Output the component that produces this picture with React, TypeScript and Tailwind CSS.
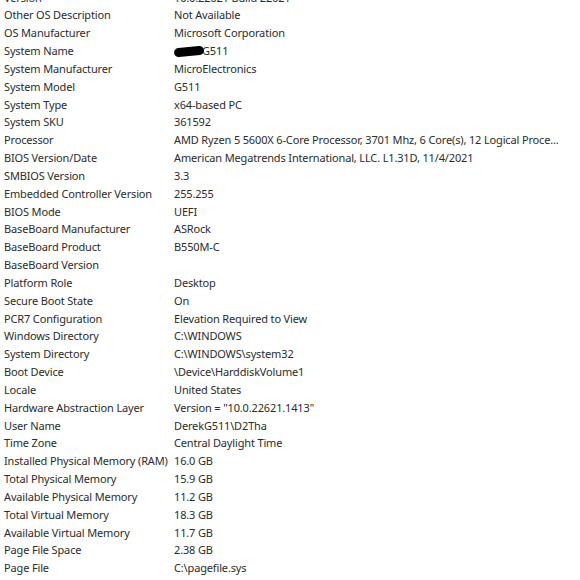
import React from "react";

const rows: [string, React.ReactNode][] = [
  ["Version", "10.0.22621 Build 22621"],
  ["Other OS Description", "Not Available"],
  ["OS Manufacturer", "Microsoft Corporation"],
  ["System Name", "__redacted__"],
  ["System Manufacturer", "MicroElectronics"],
  ["System Model", "G511"],
  ["System Type", "x64-based PC"],
  ["System SKU", "361592"],
  ["Processor", "AMD Ryzen 5 5600X 6-Core Processor, 3701 Mhz, 6 Core(s), 12 Logical Proce..."],
  ["BIOS Version/Date", "American Megatrends International, LLC. L1.31D, 11/4/2021"],
  ["SMBIOS Version", "3.3"],
  ["Embedded Controller Version", "255.255"],
  ["BIOS Mode", "UEFI"],
  ["BaseBoard Manufacturer", "ASRock"],
  ["BaseBoard Product", "B550M-C"],
  ["BaseBoard Version", ""],
  ["Platform Role", "Desktop"],
  ["Secure Boot State", "On"],
  ["PCR7 Configuration", "Elevation Required to View"],
  ["Windows Directory", "C:\\WINDOWS"],
  ["System Directory", "C:\\WINDOWS\\system32"],
  ["Boot Device", "\\Device\\HarddiskVolume1"],
  ["Locale", "United States"],
  ["Hardware Abstraction Layer", "Version = \"10.0.22621.1413\""],
  ["User Name", "DerekG511\\D2Tha"],
  ["Time Zone", "Central Daylight Time"],
  ["Installed Physical Memory (RAM)", "16.0 GB"],
  ["Total Physical Memory", "15.9 GB"],
  ["Available Physical Memory", "11.2 GB"],
  ["Total Virtual Memory", "18.3 GB"],
  ["Available Virtual Memory", "11.7 GB"],
  ["Page File Space", "2.38 GB"],
  ["Page File", "C:\\pagefile.sys"],
];

export default function App() {
  return (
    <div className="w-[580px] h-[580px] overflow-hidden bg-white">
      <div
        className="mt-[-11px] flex flex-col text-[11px] tracking-[-0.15px] text-[#2b2b2b]"
        style={{ fontFamily: '"Noto Sans", "Open Sans", sans-serif' }}
      >
        {rows.map(([k, v], i) => (
          <div key={i} className="flex h-[17.84px] items-center whitespace-nowrap">
            <div className="w-[174px] shrink-0 pl-[4px]">{k}</div>
            <div>
              {v === "__redacted__" ? (
                <span className="inline-flex items-center">
                  <span className="inline-block h-[9px] w-[30px] -rotate-6 rounded-full bg-black" />
                  <span className="-ml-[2px]">G511</span>
                </span>
              ) : (
                v
              )}
            </div>
          </div>
        ))}
      </div>
    </div>
  );
}
